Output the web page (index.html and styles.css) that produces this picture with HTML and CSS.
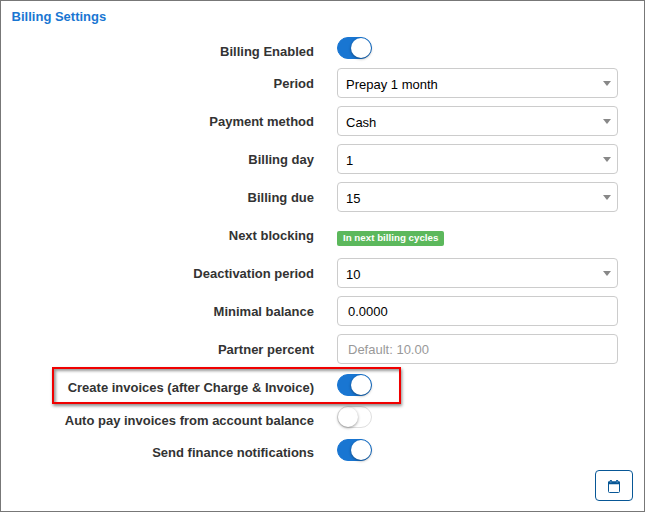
FILE: index.html
```
<!DOCTYPE html>
<html lang="en">
<head>
<meta charset="utf-8">
<title>Billing Settings</title>
<link rel="stylesheet" href="styles.css">
</head>
<body>
<main class="panel">
  <h1 class="title">Billing Settings</h1>
  <form class="form">
    <div class="row row-switch row-first"><span class="label">Billing Enabled</span><span class="switch on"></span></div>
    <div class="row"><span class="label">Period</span><div class="field select">Prepay 1 month</div></div>
    <div class="row"><span class="label">Payment method</span><div class="field select">Cash</div></div>
    <div class="row"><span class="label">Billing day</span><div class="field select">1</div></div>
    <div class="row"><span class="label">Billing due</span><div class="field select">15</div></div>
    <div class="row"><span class="label">Next blocking</span><span class="badge">In next billing cycles</span></div>
    <div class="row"><span class="label">Deactivation period</span><div class="field select">10</div></div>
    <div class="row"><span class="label">Minimal balance</span><div class="field input">0.0000</div></div>
    <div class="row"><span class="label">Partner percent</span><div class="field input placeholder">Default: 10.00</div></div>
    <div class="row row-switch row-marked"><span class="label">Create invoices (after Charge &amp; Invoice)</span><span class="switch on"></span><span class="marker"></span></div>
    <div class="row row-switch"><span class="label">Auto pay invoices from account balance</span><span class="switch"></span></div>
    <div class="row row-switch row-last"><span class="label">Send finance notifications</span><span class="switch on"></span></div>
  </form>
  <div class="actions">
    <button class="calendar" type="button" aria-label="Calendar">
      <svg width="12" height="13" viewBox="0 0 12 13"><path d="M.5 3v8.5q0 1 1 1h9q1 0 1-1V3" fill="none" stroke="#085796"/><path d="M0 4.2V2.2q0-.9.9-.9H1.7V1q0-1 1-1h.4q1 0 1 1v.3h3.8V1q0-1 1-1h.4q1 0 1 1v.3h.8q.9 0 .9.9v2z" fill="#085796"/><path d="M2.9 1v1.8M9.1 1v1.8" stroke="#8db9dc" stroke-width=".7"/></svg>
    </button>
  </div>
</main>
</body>
</html>
```

FILE: styles.css
```
* { box-sizing: border-box; }
body {
  margin: 0;
  background: #fff;
  color: #333;
  font: 13px/18px "Liberation Sans", Arial, sans-serif;
}
.panel {
  height: 512px;
  border: 1px solid #777;
  padding: 7px 11px 10px 11px;
  overflow: hidden;
}
.title {
  margin: 0 0 6px -.4px;
  color: #1976d2;
  font-size: 13px;
  line-height: 18px;
}
.row {
  display: grid;
  grid-template-columns: 302px 281px;
  column-gap: 23px;
  align-items: center;
  height: 38px;
}
.row-switch { height: 32px; }
.row-marked { position: relative; height: 33px; }
.row-last { height: 33px; }
.label {
  padding-top: 2px;
  text-align: right;
  font-weight: bold;
  white-space: nowrap;
}
.row-switch .label { padding-top: 8px; }
.row-marked .label, .row-last .label { padding-top: 7px; }
.field {
  height: 30px;
  border: 1px solid #ccc;
  border-radius: 4px;
  color: #000;
  line-height: 30px;
}
.select {
  display: flex;
  justify-content: space-between;
  align-items: center;
  padding: 4px 6px 0 8px;
}
.select::after {
  content: "";
  margin-top: -3px;
  border: 4px solid transparent;
  border-top: 5px solid #888;
  border-bottom: 0;
}
.input { padding-left: 10px; }
.placeholder { color: #999; }
.badge {
  justify-self: start;
  margin-top: 7px;
  padding: 0 6px;
  height: 15px;
  border-radius: 2px;
  background: #5cb85c;
  color: #fff;
  font-size: 9.75px;
  font-weight: bold;
  line-height: 14px;
}
.switch {
  display: flex;
  width: 35px;
  height: 22px;
  border: 1px solid #dfdfdf;
  border-radius: 11px;
  background: #fff;
}
.switch::before {
  content: "";
  width: 20px;
  height: 20px;
  border-radius: 50%;
  background: #fff;
  box-shadow: 0 1px 3px rgba(0, 0, 0, .4);
}
.switch.on {
  justify-content: flex-end;
  border-color: #1976d2;
  background: #1976d2;
}
.marker {
  position: absolute;
  left: 40px;
  top: -1px;
  width: 349px;
  height: 37px;
  border: 2px solid #f00000;
  box-shadow: 1px 2px 3px rgba(0, 0, 0, .45), inset 2px 2px 3px rgba(0, 0, 0, .4);
}
.actions {
  display: flex;
  justify-content: flex-end;
  margin-top: 4px;
}
.calendar {
  display: flex;
  align-items: center;
  justify-content: center;
  width: 38px;
  height: 31px;
  padding: 1px 0 0;
  border: 1px solid #085796;
  border-radius: 4px;
  background: #fff;
}
```
